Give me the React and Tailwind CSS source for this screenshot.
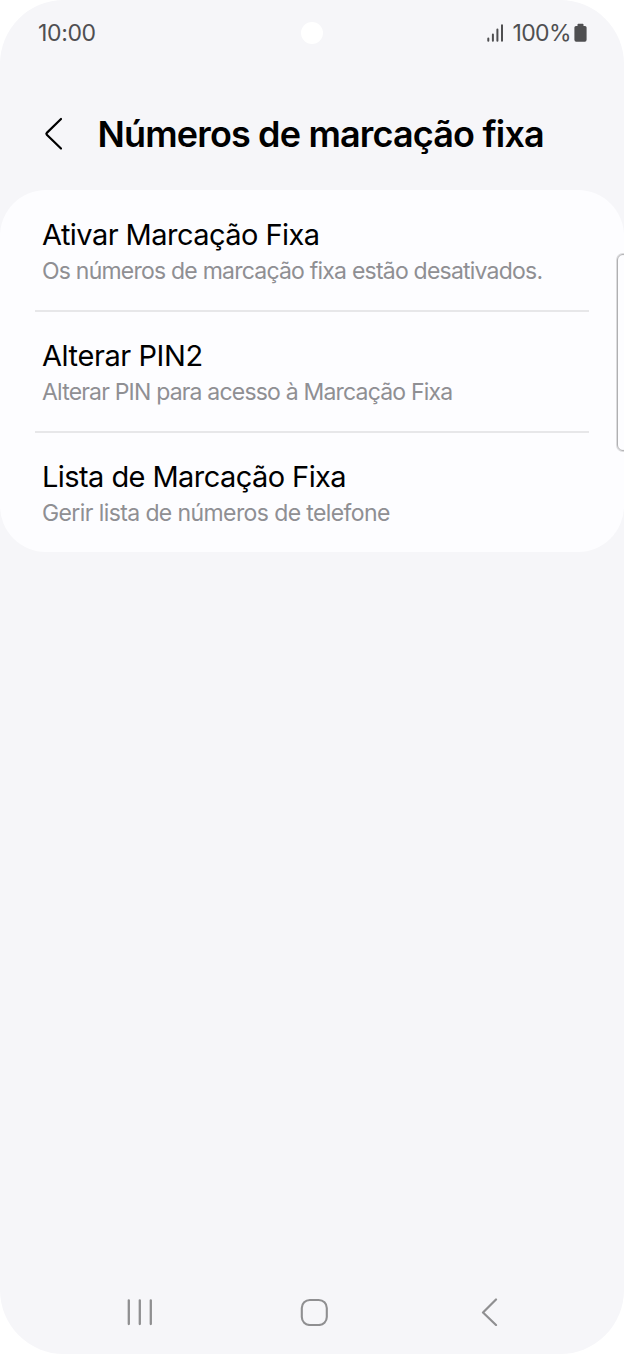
const items = [
  {
    title: 'Ativar Marcação Fixa',
    text: 'Os números de marcação fixa estão desativados.',
    titleSpacing: 'tracking-[-0.55px]',
    textSpacing: 'tracking-[-0.78px]',
  },
  {
    title: 'Alterar PIN2',
    text: 'Alterar PIN para acesso à Marcação Fixa',
    titleSpacing: 'tracking-[-0.42px]',
    textSpacing: 'tracking-[-0.81px]',
  },
  {
    title: 'Lista de Marcação Fixa',
    text: 'Gerir lista de números de telefone',
    titleSpacing: 'tracking-[-0.57px]',
    textSpacing: 'tracking-[-0.6px]',
  },
];

function StatusBar() {
  return (
    <div className="relative flex h-[66px] items-center justify-between pl-[38px] pr-[37px] text-[23px] leading-[66px] text-[#4f4f51]">
      <span className="tracking-[-0.35px]">10:00</span>
      <span className="absolute left-[301px] top-[22px] size-[22px] rounded-full bg-white" />
      <span className="flex items-center">
        <svg className="mr-2 h-[20px] w-[17px]" viewBox="0 0 17 20" fill="none" stroke="currentColor" strokeWidth="2" strokeLinecap="round">
          <path d="M1.3 15.5v2.2M5.9 11.5v6.2M10.4 6.5v11.2M15 2.3v15.4" />
        </svg>
        <span className="tracking-[-0.6px]">100%</span>
        <svg className="ml-[3px] h-[20px] w-[13px]" viewBox="0 0 13 20" fill="currentColor">
          <path d="M3.5 1.5Q3.5 .8 4.2 .8H8.8Q9.5 .8 9.5 1.5V3H11Q12.6 3 12.6 4.6V16.8Q12.6 18.7 10.8 18.7H2.2Q.4 18.7 .4 16.8V4.6Q.4 3 2 3H3.5Z" />
        </svg>
      </span>
    </div>
  );
}

function Header() {
  return (
    <header className="flex h-[124px] items-center pl-[44px] pt-[12px]">
      <svg className="h-[34px] w-[20px]" viewBox="0 0 20 34" fill="none" stroke="#000" strokeWidth="2.2" strokeLinecap="round" strokeLinejoin="round">
        <path d="M17 2L2.8 15.9Q1.9 16.8 2.8 17.7L17 31.5" />
      </svg>
      <h1 className="ml-[33.5px] whitespace-nowrap text-[36px] font-semibold leading-[44px] tracking-[-0.84px] text-black">
        Números de marcação fixa
      </h1>
    </header>
  );
}

function NavBar() {
  return (
    <nav className="mt-auto flex h-[84px] items-center pl-[126px]">
      <svg className="h-[28px] w-[28px]" viewBox="0 0 28 28" fill="none" stroke="#8f8f91" strokeWidth="2.3" strokeLinecap="round">
        <path d="M2.8 2.3V26M13.8 2.3V26M24.8 2.3V26" />
      </svg>
      <svg className="ml-[146px] h-[28px] w-[28px]" viewBox="0 0 28 28" fill="none" stroke="#8f8f91" strokeWidth="2.1">
        <rect x="1.8" y="2" width="25" height="25" rx="8" />
      </svg>
      <svg className="ml-[152px] h-[28px] w-[18px]" viewBox="0 0 18 28" fill="none" stroke="#8f8f91" strokeWidth="2.2" strokeLinecap="round" strokeLinejoin="round">
        <path d="M16 1.5L3 14.5L16 27" />
      </svg>
    </nav>
  );
}

export default function App() {
  return (
    <div className="relative h-[1354px] w-[624px] overflow-hidden bg-white font-['Inter',sans-serif]">
      <div className="flex h-full flex-col overflow-hidden rounded-[64px] bg-[#f6f6f9]">
        <StatusBar />
        <Header />
        <main className="h-[362px] rounded-[46px] bg-[#fdfdff] px-[35px]">
          {items.map((item, index) => (
            <section
              key={item.title}
              className={`h-[121px] whitespace-nowrap pl-[7px] pt-[27px] ${index ? 'shadow-[0_-1px_0_#e7e7e9,0_1px_0_#e7e7e9_inset]' : ''}`}
            >
              <h2 className={`text-[29px] leading-[36px] text-black ${item.titleSpacing}`}>{item.title}</h2>
              <p className={`text-[23px] leading-[36px] text-[#8f8f93] ${item.textSpacing}`}>{item.text}</p>
            </section>
          ))}
        </main>
        <NavBar />
      </div>
      <div className="absolute left-[617px] top-[254px] h-[197px] w-[12px] rounded-[7px] border border-[#b0b0b2] shadow-[0_0_0_1px_#dcdcde]" />
    </div>
  );
}
